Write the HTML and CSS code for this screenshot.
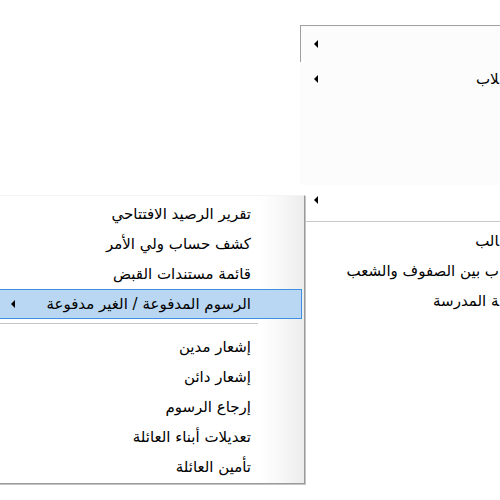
FILE: index.html
```html
<!DOCTYPE html>
<html lang="ar">
<head>
<meta charset="utf-8">
<link rel="stylesheet" href="styles.css">
</head>
<body>
<div class="desk">
  <div class="menu parent">
    <div class="pitem first dim"><span class="plabel"></span><span class="arrow"></span></div>
    <div class="pitem second dim"><span class="plabel">&zwj;لاب</span><span class="arrow"></span></div>
    <div class="ghost dim"></div>
    <div class="pitem third"><span class="plabel"></span><span class="arrow"></span></div>
    <div class="psep"></div>
    <div class="pitem"><span class="plabel">&zwj;الب</span></div>
    <div class="pitem"><span class="plabel">ب بين الصفوف والشعب</span></div>
    <div class="pitem"><span class="plabel">&zwj;ة المدرسة</span></div>
  </div>

  <div class="menu submenu">
    <div class="item"><span class="label">تقرير الرصيد الافتتاحي</span></div>
    <div class="item"><span class="label">كشف حساب ولي الأمر</span></div>
    <div class="item"><span class="label">قائمة مستندات القبض</span></div>
    <div class="item active"><span class="label">الرسوم المدفوعة / الغير مدفوعة</span><span class="arrow"></span></div>
    <div class="sep"></div>
    <div class="item"><span class="label">إشعار مدين</span></div>
    <div class="item"><span class="label">إشعار دائن</span></div>
    <div class="item"><span class="label">إرجاع الرسوم</span></div>
    <div class="item"><span class="label">تعديلات أبناء العائلة</span></div>
    <div class="item"><span class="label">تأمين العائلة</span></div>
  </div>
</div>
</body>
</html>
```
FILE: styles.css
```css
html, body {
  margin: 0;
  padding: 0;
  width: 500px;
  height: 500px;
  overflow: hidden;
  background: #ffffff;
}

.desk {
  position: relative;
  width: 500px;
  height: 500px;
  overflow: hidden;
  font-family: "DejaVu Sans", "Noto Sans", sans-serif;
  font-size: 15px;
  color: #000;
}

.menu {
  position: absolute;
  direction: rtl;
  box-sizing: border-box;
}

/* parent menu (partially visible, on the right) */
.parent {
  left: 300px;
  top: 25px;
  width: 200px;
  overflow: hidden;
  border-top: 1px solid #a0a0a0;
  background: #ffffff;
}

.pitem {
  display: flex;
  align-items: center;
  height: 30px;
  padding-left: 14px;
  padding-right: 1px;
}

.pitem .arrow {
  margin-right: auto;
}

.dim {
  background: #fcfcfc;
}

.first {
  height: 36px;
  border-left: 1px solid #a0a0a0;
  padding-left: 13px;
}

.second {
  height: 34px;
}

.ghost {
  height: 89px;
}

.psep {
  height: 1px;
  margin: 6px 0 3px;
  background: #c8c8c8;
  border-bottom: 1px solid #ffffff;
}

.plabel {
  white-space: nowrap;
}

/* submenu */
.submenu {
  left: -3px;
  top: 195px;
  width: 308px;
  padding: 3px 0 1px;
  border: 1px solid #9a9a9a;
  border-top-color: #f4f4f4;
  box-shadow: 1px 1px 0 #c4c4c4;
  background: linear-gradient(to left, #ececec 0, #f7f7f7 22px, #ffffff 44px);
}

.item {
  display: flex;
  align-items: center;
  height: 30px;
  box-sizing: border-box;
  padding-right: 51px;
  padding-left: 13px;
  margin-right: 2px;
}

.label {
  white-space: nowrap;
}

.item .arrow {
  margin-right: auto;
}

.item.active {
  background: #b9d7f3;
  border: 1px solid #3c8fe2;
  padding-right: 50px;
  padding-left: 12px;
}

.sep {
  height: 1px;
  margin: 4px 46px 7px 0;
  background: #c5c5c5;
  border-bottom: 1px solid #ffffff;
}

.arrow {
  display: block;
  flex: none;
  width: 0;
  height: 0;
  border-top: 4px solid transparent;
  border-bottom: 4px solid transparent;
  border-right: 4px solid #000;
}
```
